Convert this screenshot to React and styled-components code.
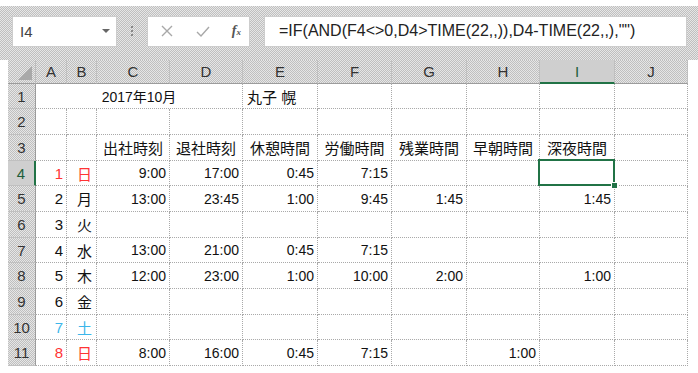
import React from 'react';
import styled, { createGlobalStyle } from 'styled-components';

const GlobalStyle = createGlobalStyle`
  html, body {
    margin: 0;
    padding: 0;
    background: #fff;
  }
  body {
    font-family: 'Liberation Sans', 'Noto Sans CJK JP', sans-serif;
  }
`;

const dither = 'repeating-conic-gradient(#bfbfbf 0 25%, #e6e6e6 0 50%) 0 0 / 2px 2px';

const RED = '#ff3434';
const BLUE = '#3cb6ea';

const columns = ['A', 'B', 'C', 'D', 'E', 'F', 'G', 'H', 'I', 'J'];
const widths = [31, 30, 73, 73, 75, 74, 75, 73, 75, 73];
const heights = [25, 26, 26, 25, 26, 26, 25, 26, 26, 25, 26];

const heads = ['出社時刻', '退社時刻', '休憩時間', '労働時間', '残業時間', '早朝時間', '深夜時間'];

// one entry per day: [day, weekday, colour, C..I]
const days = [
  ['1', '日', RED, '9:00', '17:00', '0:45', '7:15', '', '', ''],
  ['2', '月', null, '13:00', '23:45', '1:00', '9:45', '1:45', '', '1:45'],
  ['3', '火', null, '', '', '', '', '', '', ''],
  ['4', '水', null, '13:00', '21:00', '0:45', '7:15', '', '', ''],
  ['5', '木', null, '12:00', '23:00', '1:00', '10:00', '2:00', '', '1:00'],
  ['6', '金', null, '', '', '', '', '', '', ''],
  ['7', '土', BLUE, '', '', '', '', '', '', ''],
  ['8', '日', RED, '8:00', '16:00', '0:45', '7:15', '', '1:00', ''],
];

const App = () => {
  const rows = [];

  // row 1
  rows.push([
    { v: '2017年10月', span: 4, align: 'center' },
    { v: '丸子 幌', align: 'left', size: 15 },
    {}, {}, {}, {}, {},
  ]);
  // row 2
  rows.push(columns.map(() => ({})));
  // row 3
  rows.push([{}, {}, ...heads.map(h => ({ v: h, align: 'center', size: 15 })), {}]);
  // rows 4-11
  days.forEach(d => {
    const [day, wd, color, ...rest] = d;
    rows.push([
      { v: day, align: 'right', color, size: 15 },
      { v: wd, align: 'right', color, pad: 4, size: 15 },
      ...rest.map(v => ({ v, align: 'right' })),
      {},
    ]);
  });

  return (
    <>
      <GlobalStyle />
      <Page>
        <Toolbar>
          <NameBox>
            <span>I4</span>
            <Caret />
          </NameBox>
          <Grip>
            <i /><i /><i />
          </Grip>
          <ActionBox>
            <svg width="14" height="14" viewBox="0 0 14 14">
              <path d="M2 2 L12 12 M12 2 L2 12" stroke="#a8a8a8" strokeWidth="1.4" fill="none" />
            </svg>
            <svg width="16" height="14" viewBox="0 0 16 14">
              <path d="M2 8 L6 12 L14 3" stroke="#a8a8a8" strokeWidth="1.4" fill="none" />
            </svg>
            <Fx>f<sub>x</sub></Fx>
          </ActionBox>
          <FormulaBox>=IF(AND(F4&lt;&gt;0,D4&gt;TIME(22,,)),D4-TIME(22,,),"")</FormulaBox>
        </Toolbar>

        <Sheet>
          <Corner />
          {columns.map(c => (
            <ColHead key={c} $active={c === 'I'}>{c}</ColHead>
          ))}
          {rows.map((cells, r) => (
            <React.Fragment key={r}>
              <RowHead $active={r === 3}>{r + 1}</RowHead>
              {cells.map((cell, i) => (
                <Cell
                  key={i}
                  $span={cell.span}
                  $align={cell.align}
                  $color={cell.color}
                  $pad={cell.pad}
                  $size={cell.size}
                  $selected={r === 3 && i === 8}
                >
                  {cell.v}
                </Cell>
              ))}
            </React.Fragment>
          ))}
        </Sheet>
      </Page>
    </>
  );
};

const Page = styled.div`
  width: 698px;
  height: 373px;
  padding-top: 6px;
  box-sizing: border-box;
  overflow: hidden;
`;

const Toolbar = styled.div`
  display: flex;
  align-items: center;
  height: 54px;
  padding: 0 0 4px 12px;
  box-sizing: border-box;
  background: ${dither};
`;

const NameBox = styled.div`
  display: flex;
  align-items: center;
  justify-content: space-between;
  width: 105px;
  height: 31px;
  padding: 0 6px 0 7px;
  box-sizing: border-box;
  background: #fff;
  border: 1px solid #cdcdcd;
  font-size: 15px;
  color: #444;
`;

const Caret = styled.div`
  width: 0;
  height: 0;
  border-left: 4px solid transparent;
  border-right: 4px solid transparent;
  border-top: 4px solid #666;
`;

const Grip = styled.div`
  display: flex;
  flex-direction: column;
  gap: 2px;
  margin: 0 14px 0 14px;

  i {
    width: 2px;
    height: 2px;
    background: #888;
  }
`;

const ActionBox = styled.div`
  display: flex;
  align-items: center;
  justify-content: space-between;
  width: 103px;
  height: 31px;
  padding: 0 8px 0 12px;
  box-sizing: border-box;
  background: #fff;
  border: 1px solid #cdcdcd;
`;

const Fx = styled.span`
  font-family: 'Liberation Serif', serif;
  font-style: italic;
  font-weight: bold;
  font-size: 14px;
  color: #555;

  sub {
    font-size: 9px;
    vertical-align: 0;
  }
`;

const FormulaBox = styled.div`
  display: flex;
  align-items: center;
  width: 423px;
  height: 31px;
  margin-left: 14px;
  padding-left: 14px;
  box-sizing: border-box;
  background: #fff;
  border: 1px solid #cdcdcd;
  font-size: 16px;
  color: #222;
  white-space: nowrap;
`;

const Sheet = styled.div`
  display: grid;
  grid-template-columns: 28px ${widths.map(w => `${w}px`).join(' ')};
  grid-template-rows: 24px ${heights.map(h => `${h}px`).join(' ')};
  margin-left: 8px;
  font-size: 14px;
`;

const Corner = styled.div`
  position: relative;
  background: ${dither};
  border-right: 1px solid #bdbdbd;
  border-bottom: 1px solid #9c9c9c;

  &::after {
    content: '';
    position: absolute;
    right: 3px;
    bottom: 3px;
    border-left: 14px solid transparent;
    border-bottom: 14px solid #a9a9a9;
  }
`;

const ColHead = styled.div`
  display: flex;
  align-items: center;
  justify-content: center;
  background: ${p => (p.$active ? '#cfcfcf' : dither)};
  border-right: 1px solid #c0c0c0;
  border-bottom: ${p => (p.$active ? '2px solid #217346' : '1px solid #9c9c9c')};
  color: ${p => (p.$active ? '#1e5e3a' : '#333')};
  font-size: 15px;
`;

const RowHead = styled.div`
  display: flex;
  align-items: center;
  justify-content: center;
  background: ${p => (p.$active ? '#cfcfcf' : dither)};
  border-right: ${p => (p.$active ? '2px solid #217346' : '1px solid #9c9c9c')};
  border-bottom: 1px solid #c0c0c0;
  color: ${p => (p.$active ? '#1e5e3a' : '#333')};
  font-size: 15px;
`;

const Cell = styled.div`
  grid-column: span ${p => p.$span || 1};
  position: relative;
  display: flex;
  align-items: center;
  justify-content: ${p =>
    p.$align === 'right' ? 'flex-end' : p.$align === 'center' ? 'center' : 'flex-start'};
  padding: 0 ${p => (p.$pad ? `${p.$pad}px` : p.$align === 'right' ? '3px' : '4px')};
  border-right: 1px dotted #a9a9a9;
  border-bottom: 1px dotted #a9a9a9;
  color: ${p => p.$color || '#111'};
  font-size: ${p => p.$size || 14}px;
  white-space: nowrap;

  ${p =>
    p.$selected &&
    `
    &::after {
      content: '';
      position: absolute;
      top: -2px;
      left: -2px;
      right: -1px;
      bottom: -1px;
      border: 2px solid #217346;
    }
    &::before {
      content: '';
      position: absolute;
      right: -4px;
      bottom: -4px;
      width: 5px;
      height: 5px;
      background: #217346;
      border: 1px solid #fff;
      z-index: 1;
    }
  `}
`;

export default App;
